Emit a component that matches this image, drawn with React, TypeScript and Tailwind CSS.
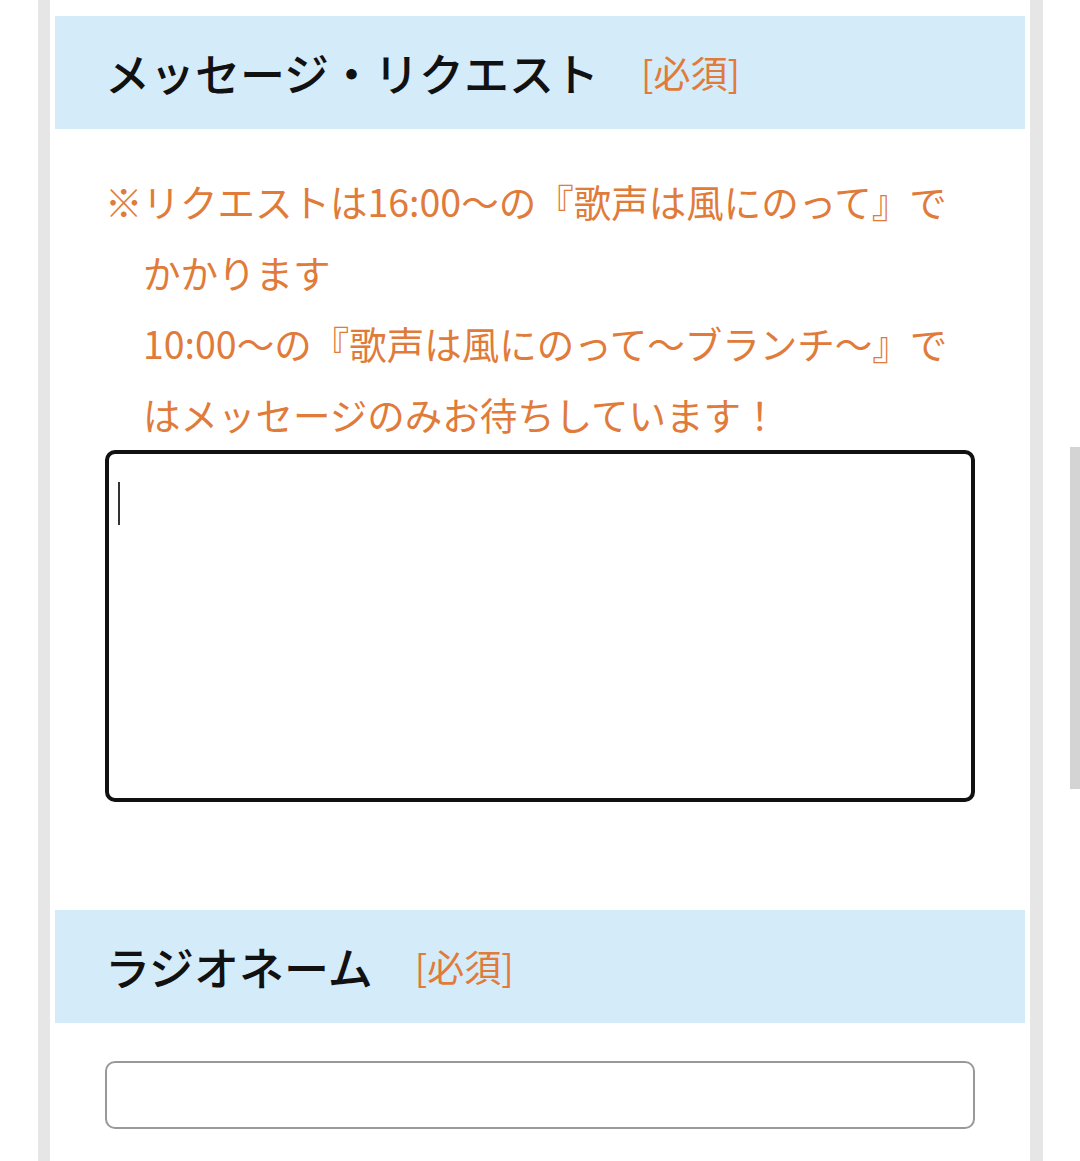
import React from "react";

const font = { fontFamily: '"Noto Sans CJK JP", "Noto Sans", sans-serif' };

function SectionHeader({ title }: { title: string }) {
  return (
    <div className="h-[113px] bg-[#d4ebfa] flex items-center pl-[50px]">
      <span className="text-[45px] font-medium text-[#111] leading-none">{title}</span>
      <span className="ml-[42px] text-[37px] text-[#e07b3a] leading-none">[必須]</span>
    </div>
  );
}

export default function App() {
  return (
    <div className="relative min-h-[1161px] h-[1161px] overflow-hidden bg-white flex" style={font}>
      <div className="w-[38px] shrink-0" />
      <div className="w-[12px] shrink-0 bg-[#e6e6e6]" />
      <div className="flex-1 bg-white px-[5px] pt-[16px]">
        <SectionHeader title="メッセージ・リクエスト" />
        <div className="px-[50px]">
          <p className="mt-[36px] text-[37.5px] leading-[71px] text-[#e07b3a] pl-[38px] -indent-[38px] whitespace-nowrap">
            ※リクエストは16:00〜の『歌声は風にのって』で
            <br />
            かかります
            <br />
            10:00〜の『歌声は風にのって〜ブランチ〜』で
            <br />
            はメッセージのみお待ちしています！
          </p>
          <div className="relative mt-[1px]">
            <textarea
              className="block w-full h-[352px] border-4 border-[#111] rounded-[10px] resize-none bg-white outline-none"
              readOnly
            />
            <span className="absolute left-[13px] top-[32px] w-[2px] h-[43px] bg-[#333]" />
          </div>
        </div>
        <div className="mt-[108px]">
          <SectionHeader title="ラジオネーム" />
        </div>
        <div className="px-[50px] pt-[38px]">
          <div className="h-[68px] border-2 border-[#999] rounded-[10px] bg-white" />
        </div>
      </div>
      <div className="w-[13px] shrink-0 bg-[#e6e6e6]" />
      <div className="w-[37px] shrink-0" />
      <div className="absolute right-0 top-[447px] w-[10px] h-[342px] bg-[#d4d4d4]" />
    </div>
  );
}
